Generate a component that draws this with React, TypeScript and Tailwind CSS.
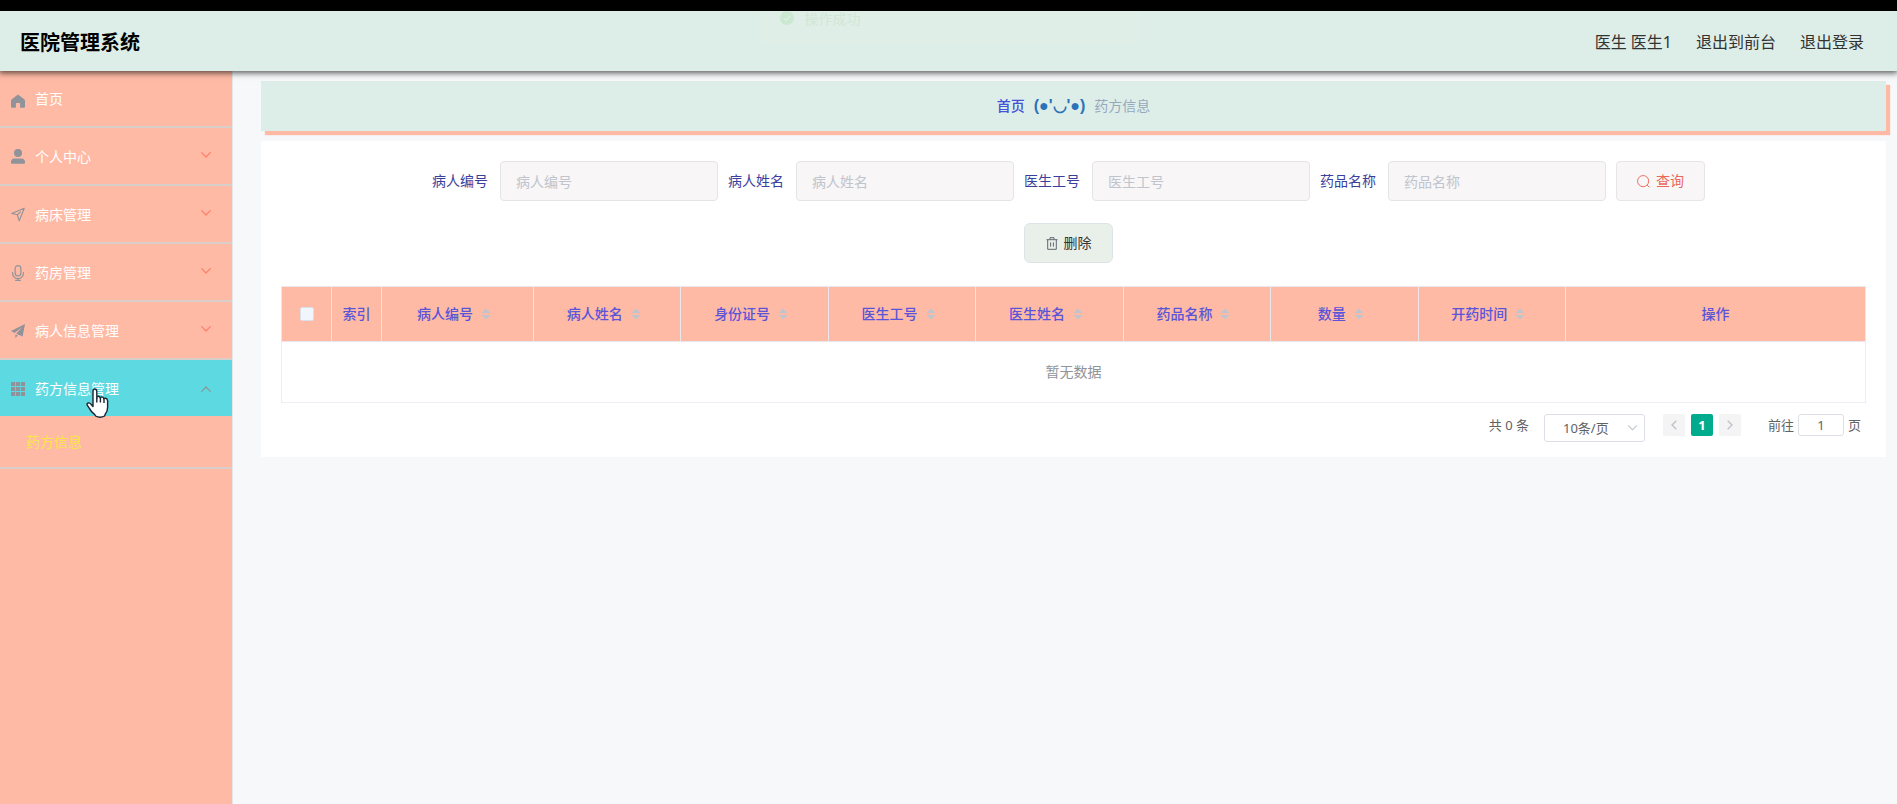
import { ReactNode, useState } from "react";

type MenuItem = {
  name: string;
  icon: ReactNode;
  children: string[];
};

const HomeIcon = () => (
  <svg viewBox="0 0 14 14" className="size-[14px]" fill="currentColor">
    <path d="M7 0.4 0.8 5.2Q0 5.9 0 6.8V12.6Q0 13.8 1.2 13.8H4.9V9.6Q4.9 9.1 5.4 9.1H8.6Q9.1 9.1 9.1 9.6V13.8H12.8Q14 13.8 14 12.6V6.8Q14 5.9 13.2 5.2Z" />
  </svg>
);

const UserIcon = () => (
  <svg viewBox="0 0 14 15" className="h-[15px] w-[14px]" fill="currentColor">
    <circle cx="7" cy="4" r="4" />
    <path d="M3.6 9.4H10.4Q14 9.4 14 13V13.8Q14 14.8 13 14.8H1Q0 14.8 0 13.8V13Q0 9.4 3.6 9.4Z" />
  </svg>
);

const PositionIcon = () => (
  <svg viewBox="0 0 15 15" className="size-[15px]" fill="none" stroke="currentColor" strokeWidth="1.2" strokeLinejoin="round">
    <path d="M14.2 0.8 0.8 6.4 6.8 7.8 8.8 14.2Z" />
    <path d="M10.4 4.4 6.8 7.8" />
  </svg>
);

const MicIcon = () => (
  <svg viewBox="0 0 14 16" className="h-[16px] w-[14px]" fill="none" stroke="currentColor" strokeWidth="1.2" strokeLinecap="round">
    <rect x="4.1" y="0.6" width="5.8" height="10.4" rx="2.9" />
    <path d="M1.6 7.6V8.4A5.4 5.2 0 0 0 12.4 8.4V7.6M7 13.6V15.3M4.6 15.3H9.4" />
  </svg>
);

const PromotionIcon = () => (
  <svg viewBox="0 0 14 14" className="size-[14px]" fill="currentColor">
    <path d="M14 0 0 7.1 3.6 9 11.3 3 5.2 9.8 11.6 12.4Z" />
    <path d="M4.4 10.4V14L6.9 11.5Z" />
  </svg>
);

const GridIcon = () => (
  <svg viewBox="0 0 14 14" className="size-[14px]" fill="currentColor">
    {[0, 5, 10].map((y) =>
      [0, 5, 10].map((x) => <rect key={`${x}-${y}`} x={x} y={y} width="4.2" height="4" />)
    )}
  </svg>
);

const Chevron = ({ className }: { className: string }) => (
  <svg viewBox="0 0 10 6" className={className} fill="none" stroke="currentColor" strokeWidth="1.2" strokeLinecap="round" strokeLinejoin="round">
    <path d="M0.7 0.7 5 5 9.3 0.7" />
  </svg>
);

const menus: MenuItem[] = [
  { name: "个人中心", icon: <UserIcon />, children: [] },
  { name: "病床管理", icon: <PositionIcon />, children: [] },
  { name: "药房管理", icon: <MicIcon />, children: [] },
  { name: "病人信息管理", icon: <PromotionIcon />, children: [] },
  { name: "药方信息管理", icon: <GridIcon />, children: ["药方信息"] },
];

const filters = ["病人编号", "病人姓名", "医生工号", "药品名称"];

const columns = [
  "病人编号",
  "病人姓名",
  "身份证号",
  "医生工号",
  "医生姓名",
  "药品名称",
  "数量",
  "开药时间",
];

function Header() {
  return (
    <header className="relative z-10 flex h-[60px] items-center justify-between bg-[#ddeee8] pr-[33px] pl-5 shadow-[0_1px_6px_1px_rgba(0,0,0,0.65)]">
      <h1 className="pt-1 text-xl leading-7 font-bold text-black">医院管理系统</h1>
      <nav className="flex gap-6 pt-px text-base leading-6 text-[#333]">
        <span>医生 医生1</span>
        <a href="#front">退出到前台</a>
        <a href="#logout">退出登录</a>
      </nav>

      {/* 淡出中的操作提示 */}
      <div className="absolute inset-x-0 top-0 flex justify-center">
        <div className="flex h-8 w-[380px] items-start gap-[11px] bg-[#dfeee6] pl-[21px] text-sm leading-4 text-[#d0e7d6]">
          <svg viewBox="0 0 14 14" className="size-[14px]">
            <circle cx="7" cy="7" r="7" fill="#cbe8d0" />
            <path d="M4 7.2 6.2 9.3 10.2 5" fill="none" stroke="#dfeee6" strokeWidth="1.4" />
          </svg>
          操作成功
        </div>
      </div>
    </header>
  );
}

/** 侧边导航 */
function Sidebar() {
  const [opened, setOpened] = useState("药方信息管理");

  return (
    <aside className="w-[233px] shrink-0 border-r border-[#e6e6e6] bg-[#ffbaa5] text-sm text-white">
      <a href="#home" className="flex h-[57px] items-center gap-[10px] border-b-2 border-[#d8cfcc] pt-px pl-[11px]">
        <span className="flex w-[14px] justify-center pt-1 text-[#909399]">
          <HomeIcon />
        </span>
        首页
      </a>
      {menus.map((menu) => {
        const open = menu.name === opened;
        return (
          <div key={menu.name}>
            <button
              type="button"
              onClick={() => setOpened(open ? "" : menu.name)}
              className={
                open
                  ? "relative flex h-14 w-full items-center gap-[10px] bg-[#5cd9e1] pt-px pl-[11px]"
                  : "relative flex h-[58px] w-full items-center gap-[10px] border-b-2 border-[#d8cfcc] pt-px pl-[11px]"
              }
            >
              <span className="flex w-[14px] justify-center text-[#909399]">{menu.icon}</span>
              {menu.name}
              <span className={open ? "mr-[21px] ml-auto text-[#909399]" : "mr-[21px] ml-auto pb-1 text-[#ff7d69]"}>
                <Chevron className={open ? "h-[6px] w-[10px] rotate-180" : "h-[6px] w-[10px]"} />
              </span>
              {/* 鼠标指针 */}
              {open && (
                <svg viewBox="0 0 23 31" className="absolute top-[28px] left-[86px] h-[31px] w-[23px]" fill="#fff" stroke="#1c2430" strokeWidth="1.4" strokeLinejoin="round">
                  <path d="M7 18.5V3.2Q7 1 8.8 1T10.8 3.2V10.2Q10.8 8.2 12.4 8.2T14.4 10.4Q14.6 8.9 16 8.9T18 11.2Q18.2 10.2 19.6 10.3T21.6 12.6V19.4Q21.6 23.4 19.2 26.2L18.6 28Q14 30.4 9.6 28L8.8 26.6Q4.8 23.6 3.4 20.4L1.2 17.2Q0.6 15.4 2.2 15T5 16.2Z" />
                  <path d="M10.8 10V14.4M14.4 10.6V14.6M18 11.4V15" fill="none" />
                </svg>
              )}
            </button>
            {open &&
              menu.children.map((child) => (
                <a
                  key={child}
                  href="#prescription"
                  className="flex h-[53px] items-center border-b-2 border-[#d8cfcc] pl-[26px] text-[#f8e64c]"
                >
                  {child}
                </a>
              ))}
          </div>
        );
      })}
    </aside>
  );
}

function SearchForm() {
  return (
    <form onSubmit={(e) => e.preventDefault()}>
      <div className="flex flex-wrap justify-center">
        {filters.map((name) => (
          <div key={name} className="mr-[10px] flex items-center gap-3">
            <label htmlFor={name} className="text-sm text-[#3b3f9c]">
              {name}
            </label>
            <input
              id={name}
              placeholder={name}
              className="h-10 w-[218px] rounded border border-[#e4e4e9] bg-[#f8f6f7] px-[15px] text-sm text-[#606266] placeholder:text-[#c0c4cc]"
            />
          </div>
        ))}
        <button
          type="submit"
          className="mr-[10px] flex h-10 w-[89px] items-center justify-center gap-[6px] rounded border border-[#e6e6e8] bg-[#f8f6f7] text-sm text-[#e8695c]"
        >
          <svg viewBox="0 0 14 14" className="size-[13px]" fill="none" stroke="currentColor" strokeWidth="1">
            <circle cx="6.6" cy="6.6" r="6" />
            <path d="M10.8 10.8 13.2 13.2" />
          </svg>
          查询
        </button>
      </div>
      <div className="mt-[22px] flex justify-center">
        <button
          type="button"
          className="mr-[10px] flex h-10 w-[89px] items-center justify-center gap-[6px] rounded-md border border-[#dde4e8] bg-[#e9f0ea] text-sm text-[#333]"
        >
          <svg viewBox="0 0 12 13" className="h-[13px] w-[12px]" fill="none" stroke="#60686c" strokeWidth="1">
            <path d="M0.5 2.7H11.5M4 2.5V0.7H8V2.5M1.7 3V12.3H10.3V3M4.6 5.4V9.6M7.4 5.4V9.6" />
          </svg>
          删除
        </button>
      </div>
    </form>
  );
}

const SortIcon = () => (
  <svg viewBox="0 0 10 12" className="size-[12px]" fill="#c0c4cc">
    <path d="M5 0.5 9.6 5H0.4ZM5 11.5 9.6 7H0.4Z" />
  </svg>
);

function DataTable() {
  return (
    <table className="mt-[23px] w-full table-fixed border-collapse border border-[#ebeef5] text-sm">
      <colgroup>
        <col className="w-[50px]" />
        <col className="w-[50px]" />
        <col className="w-[152px]" />
        {columns.slice(1).map((name) => (
          <col key={name} />
        ))}
        <col className="w-[300px]" />
      </colgroup>
      <thead>
        <tr className="h-[55px] bg-[#ffbaa5] text-[#5a55d8]">
          <th className="border border-[#ebe6ec]">
            <input
              type="checkbox"
              aria-label="全选"
              className="mx-auto block size-[14px] appearance-none rounded-xs border border-[#dcdfe6] bg-[#f1f6fe]"
            />
          </th>
          <th className="border border-[#ebe6ec] font-medium">索引</th>
          {columns.map((name) => (
            <th key={name} className="border border-[#ebe6ec] font-medium">
              <span className="flex items-center justify-center gap-[7px] pr-[6px]">
                {name}
                <SortIcon />
              </span>
            </th>
          ))}
          <th className="border border-[#ebe6ec] font-medium">操作</th>
        </tr>
      </thead>
      <tbody>
        <tr className="h-[61px]">
          <td colSpan={columns.length + 3} className="text-center text-[#909399]">
            暂无数据
          </td>
        </tr>
      </tbody>
    </table>
  );
}

function Pagination() {
  return (
    <div className="mt-[11px] flex items-start justify-end pr-[5px] text-[13px] leading-[22px] text-[#606266]">
      <span className="mr-[15px]">共 0 条</span>
      <div className="relative mr-[18px]">
        <select
          aria-label="每页条数"
          className="h-7 w-[101px] appearance-none rounded-[3px] border border-[#dcdfe6] bg-white pl-[18px] text-[13px]"
        >
          <option>10条/页</option>
        </select>
        <Chevron className="pointer-events-none absolute top-[11px] right-2 h-[6px] w-[9px] text-[#c0c4cc]" />
      </div>
      <div className="mr-[27px] flex gap-[6px]">
        <button type="button" aria-label="上一页" className="flex h-[22px] w-[22px] items-center justify-center rounded-xs bg-[#f4f4f5] text-[#c0c4cc]">
          <svg viewBox="0 0 6 10" className="h-[10px] w-[6px]" fill="none" stroke="currentColor" strokeWidth="1.5">
            <path d="M5.3 0.7 1 5 5.3 9.3" />
          </svg>
        </button>
        <button type="button" className="h-[22px] w-[22px] rounded-xs bg-[#00ab8e] font-bold text-white">
          1
        </button>
        <button type="button" aria-label="下一页" className="flex h-[22px] w-[22px] items-center justify-center rounded-xs bg-[#f4f4f5] text-[#c0c4cc]">
          <svg viewBox="0 0 6 10" className="h-[10px] w-[6px]" fill="none" stroke="currentColor" strokeWidth="1.5">
            <path d="M0.7 0.7 5 5 0.7 9.3" />
          </svg>
        </button>
      </div>
      <label className="flex gap-1">
        前往
        <input
          defaultValue="1"
          className="h-[22px] w-[46px] rounded-[3px] border border-[#dcdfe6] bg-white text-center text-[13px]"
        />
        页
      </label>
    </div>
  );
}

export default function App() {
  return (
    <div className="flex min-h-screen flex-col border-t-[11px] border-black bg-[#f7f8fa] font-['Noto_Sans','Noto_Sans_CJK_SC',sans-serif]">
      <Header />
      <div className="flex flex-1">
        <Sidebar />
        <main className="min-w-0 flex-1 pt-[10px] pr-[11px] pl-7">
          <nav className="flex h-[50px] items-center justify-center gap-[9px] bg-[#ddeee8] text-sm shadow-[4px_4px_1px_#ffbaa5]">
            <a href="#home" className="font-medium text-[#4450d8]">
              首页
            </a>
            <span className="font-['Liberation_Sans','Noto_Sans',sans-serif] text-base font-bold text-[#2b72b8]">(●'◡'●)</span>
            <span className="text-[#97a8be]">药方信息</span>
          </nav>
          <section className="mt-[10px] bg-white px-5 pt-5 pb-[15px]">
            <SearchForm />
            <DataTable />
            <Pagination />
          </section>
        </main>
      </div>
    </div>
  );
}
